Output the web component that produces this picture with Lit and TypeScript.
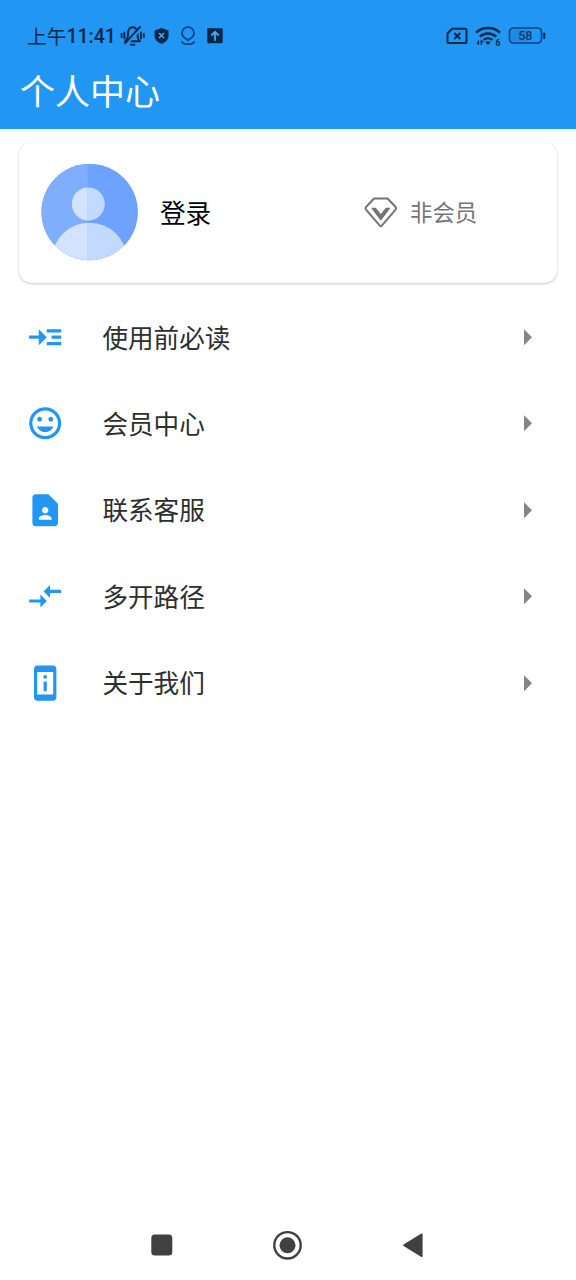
import { LitElement, html, css, svg } from "lit";
import { customElement } from "lit/decorators.js";

const INK = "#052848";

const rows = [
  { label: "使用前必读", path: "M22 7h-9v2h9V7zm0 8h-9v2h9v-2zm0-4h-6v2h6v-2zm-9 1L8 7v4H2v2h6v4l5-5z" },
  {
    label: "会员中心",
    path: "M11.99 2C6.47 2 2 6.48 2 12s4.47 10 9.99 10C17.52 22 22 17.52 22 12S17.52 2 11.99 2zM12 20c-4.42 0-8-3.58-8-8s3.58-8 8-8 8 3.58 8 8-3.58 8-8 8zm3.5-9c.83 0 1.5-.67 1.5-1.5S16.33 8 15.5 8 14 8.67 14 9.5s.67 1.5 1.5 1.5zm-7 0c.83 0 1.5-.67 1.5-1.5S9.33 8 8.5 8 7 8.67 7 9.5 7.67 11 8.5 11zm3.5 6.5c2.33 0 4.31-1.46 5.11-3.5H6.89c.8 2.04 2.78 3.5 5.11 3.5z",
  },
  {
    label: "联系客服",
    path: "M14 2H6c-1.1 0-1.99.9-1.99 2L4 20c0 1.1.89 2 1.99 2H18c1.1 0 2-.9 2-2V8l-6-6zm-2 8c1.1 0 2 .9 2 2s-.9 2-2 2-2-.9-2-2 .9-2 2-2zm4 8H8v-.57c0-.81.48-1.53 1.22-1.85.85-.37 1.79-.58 2.78-.58.99 0 1.93.21 2.78.58.74.32 1.22 1.04 1.22 1.85V18z",
  },
  { label: "多开路径", path: "M9.01 14H2v2h7.01v3L13 15l-3.99-4v3zm5.98-1v-3H22V8h-7.01V5L11 9l3.99 4z" },
  {
    label: "关于我们",
    path: "M13 7h-2v2h2V7zm0 4h-2v6h2v-6zm4-9.99L7 1c-1.1 0-2 .9-2 2v18c0 1.1.9 2 2 2h10c1.1 0 2-.9 2-2V3c0-1.1-.9-1.99-2-1.99zM17 19H7V5h10v14z",
  },
];

const muted = svg`
  <g fill="none" stroke=${INK} stroke-width="1.900" stroke-linecap="round" stroke-linejoin="round">
    <path d="M4.500 17.300h15c-2.200-1.700-2.500-3.300-2.500-7.300C17 5.800 15 3.200 12.200 3.200S7.500 5.800 7.500 10c0 4-.3 5.600-3 7.300z"/>
    <path d="M10.500 20.800h3.400M3.900 8.500v6M1.100 10v3M20.500 8.500v6M23.300 10v3"/>
  </g>
  <path d="M6.300 20L20.500 4.500" stroke="#2196f3" stroke-width="2"/>
  <path d="M4.600 19.200L19.500 2.800" stroke=${INK} stroke-width="1.900" stroke-linecap="round"/>`;

@customElement("app-root")
export class AppRoot extends LitElement {
  static styles = css`
    :host {
      display: flex;
      flex-direction: column;
      box-sizing: border-box;
      width: 576px;
      height: 1280px;
      background: #fff;
      font-family: "Noto Sans CJK SC", sans-serif;
      overflow: hidden;
    }
    svg { display: block; flex: none; }
    .top { background: #2196f3; height: 129px; flex: none; }
    .status {
      display: flex;
      align-items: center;
      height: 71px;
      box-sizing: border-box;
      padding: 0 30.500px 0 27px;
      color: #052848;
    }
    .time { display: flex; align-items: center; width: 93px; font-size: 19.700px; line-height: 30px; white-space: nowrap; }
    .digits { font-family: Roboto, sans-serif; font-weight: 500; font-size: 19.500px; padding-top: 3px; }
    .left, .right { display: flex; align-items: center; }
    .right { margin-left: auto; gap: 7px; }
    .shield { margin-left: 9px; }
    .pin { margin-left: 11px; }
    .up { margin-left: 11px; }
    .tiny { font: 700 8.500px Roboto, sans-serif; }
    .charge { font: 500 12.500px Roboto, sans-serif; }
    .title {
      margin: 0;
      padding-left: 20px;
      font-size: 35px;
      line-height: 38px;
      font-weight: 400;
      color: #fff;
    }
    .card {
      display: flex;
      align-items: center;
      box-sizing: border-box;
      height: 141px;
      flex: none;
      margin: 13px 19px 0;
      padding-left: 22px;
      border-radius: 13px;
      background: #fff;
      box-shadow: 0 1px 2.500px rgba(0, 0, 0, 0.2), 0 0 1px rgba(0, 0, 0, 0.12);
    }
    .login { width: 204px; margin-left: 22px; padding-bottom: 2px; font-size: 25.600px; line-height: 38px; color: #000; }
    .member { margin-left: 13px; padding-bottom: 3px; font-size: 22.400px; line-height: 34px; color: #757575; }
    .list { display: flex; flex-direction: column; padding-top: 11px; flex: 1; }
    .row {
      display: flex;
      align-items: center;
      height: 86.400px;
      box-sizing: border-box;
      padding: 0 29.600px 0 25.600px;
      color: #2e2e2e;
    }
    .label { flex: 1; margin-left: 38.400px; padding-bottom: 1.200px; font-size: 25.600px; line-height: 38px; }
    .nav { display: flex; align-items: center; height: 70px; flex: none; padding-left: 151px; }
    .home { margin-left: 100px; }
    .back { margin-left: 99px; }
  `;

  render() {
    return html`
      <header class="top">
        <div class="status">
          <div class="time"><span>上午</span><span class="digits">11:41</span></div>
          <div class="left">
            <svg width="25" height="24" viewBox="0 0 24 24">${muted}</svg>
            <svg class="shield" width="15" height="18" viewBox="0 0 15 18">
              <path d="M7.500 1L14.500 3.400V8.500C14.500 12.500 11.500 15.500 7.500 17 3.500 15.500.5 12.500.5 8.500V3.400z" fill=${INK}/>
              <path d="M5 6l5 5M10 6l-5 5" stroke="#4aa8f5" stroke-width="1.600"/>
            </svg>
            <svg class="pin" width="16" height="20" viewBox="0 0 16 20" fill="none" stroke="#0b4586" stroke-width="1.800">
              <path d="M8 14.400C6.500 13 2 11 2 7.200a6 6 0 0 1 12 0c0 3.800-4.500 5.800-6 7.200z"/>
              <path d="M1.500 15.300c1.500 3.800 11.500 3.800 13 0"/>
            </svg>
            <svg class="up" width="16" height="16" viewBox="0 0 16 16">
              <rect x=".3" y=".2" width="15.400" height="15" rx="1" fill=${INK}/>
              <path d="M8 12.800V4M4.300 7.500L8 3.800l3.700 3.700" fill="none" stroke="#4aa8f5" stroke-width="1.800"/>
            </svg>
          </div>
          <div class="right">
            <svg width="23" height="18" viewBox="0 0 23 18" fill="none" stroke=${INK} stroke-width="2">
              <path d="M7 1.700h13.500a1 1 0 0 1 1 1v12.300a1 1 0 0 1-1 1h-17a1 1 0 0 1-1-1V6.500z"/>
              <path d="M9.300 6l6 6M15.300 6l-6 6"/>
            </svg>
            <svg width="26" height="20" viewBox="0 0 26 20">
              <g fill="none" stroke=${INK} stroke-width="2.300">
                <path d="M1 6.700c6.500-6.300 17.500-6.300 24 0"/>
                <path d="M4.800 10.700c4.500-4.300 11.900-4.300 16.400 0"/>
                <path d="M8.500 14c2.600-2.300 6.400-2.300 9 0"/>
              </g>
              <path d="M10.300 16.300c1.600-1.300 3.800-1.300 5.400 0L13 19z" fill=${INK}/>
              <path d="M3.500 14.500v4.500M1.500 17l2.200.2M6.200 19v-4.300l2.200 1.500" fill="none" stroke=${INK} stroke-width="1.200"/>
              <text class="tiny" x="20.500" y="19.500" fill=${INK}>6</text>
            </svg>
            <svg width="38" height="18" viewBox="0 0 38 18">
              <rect x="1.500" y="1" width="32" height="15" rx="4" fill="none" stroke="#0b4586" stroke-width="1.700"/>
              <rect x="3" y="2.500" width="18" height="12" rx="2.500" fill="#1e8ae2"/>
              <path d="M36.300 6.500v4.500" stroke=${INK} stroke-width="2" stroke-linecap="round"/>
              <text class="charge" x="17.300" y="13" text-anchor="middle" fill="#083a6c">58</text>
            </svg>
          </div>
        </div>
        <h1 class="title">个人中心</h1>
      </header>

      <section class="card">
        <svg width="97" height="97" viewBox="0 0 97 97">
          <defs>
            <clipPath id="disc"><circle cx="48.700" cy="48" r="48.200"/></clipPath>
            <clipPath id="half"><rect width="46.700" height="97"/></clipPath>
          </defs>
          <g clip-path="url(#disc)">
            <rect width="97" height="97" fill="#6ea2ff"/>
            <g fill="#c3d9ff"><circle cx="47.300" cy="40" r="16.500"/><circle cx="48.500" cy="96.500" r="37.800"/></g>
            <g clip-path="url(#half)">
              <rect width="97" height="97" fill="#80aeff"/>
              <g fill="#d2e2ff"><circle cx="47.300" cy="40" r="16.500"/><circle cx="48.500" cy="96.500" r="37.800"/></g>
            </g>
          </g>
        </svg>
        <span class="login">登录</span>
        <svg width="33" height="31" viewBox="0 0 33 31">
          <path d="M10 1.500h13.500L31.600 10q.8 1.300 0 2.600L17.800 28.700q-1 .9-2 0L2 12.600q-.8-1.300 0-2.600z" fill="none" stroke="#757575" stroke-width="2" stroke-linejoin="round"/>
          <path d="M7 10.800h4.800l5 6.200 5-6.200h4.800L16.800 23.800z" fill="#757575"/>
        </svg>
        <span class="member">非会员</span>
      </section>

      <main class="list">
        ${rows.map(
          (r) => html`<div class="row">
            <svg width="38.4" height="38.4" viewBox="0 0 24 24"><path fill="#2196f3" d=${r.path} /></svg>
            <span class="label">${r.label}</span>
            <svg width="38.4" height="38.4" viewBox="0 0 24 24"><path fill="#858585" d="M10 17l5-5-5-5v10z" /></svg>
          </div>`
        )}
      </main>

      <footer class="nav">
        <svg width="22" height="22" viewBox="0 0 22 22"><rect x=".3" y=".5" width="21" height="21" rx="3.500" fill="#404040"/></svg>
        <svg class="home" width="30" height="30" viewBox="0 0 30 30">
          <circle cx="14.500" cy="15.300" r="13.200" fill="none" stroke="#404040" stroke-width="2.400"/>
          <circle cx="14.500" cy="15.300" r="8" fill="#404040"/>
        </svg>
        <svg class="back" width="22" height="26" viewBox="0 0 22 26">
          <path d="M2 13.300L19.800 2.300v22z" fill="#404040" stroke="#404040" stroke-width="1.600" stroke-linejoin="round"/>
        </svg>
      </footer>
    `;
  }
}
